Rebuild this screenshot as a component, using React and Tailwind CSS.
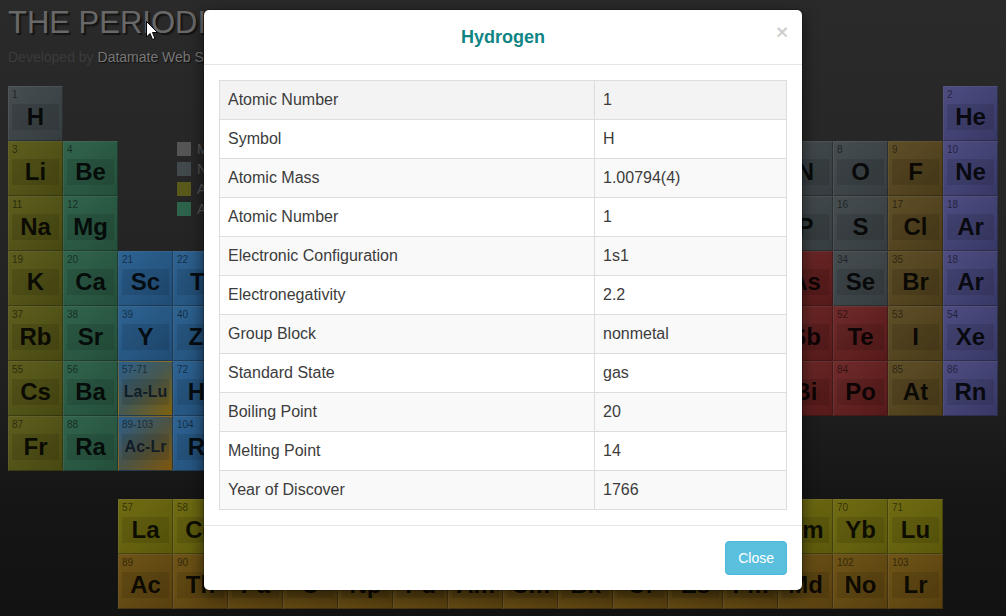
import React from 'react'

const CAT = {
  s: 'bg-[linear-gradient(135deg,#454d50,#363d40)]',
  a: 'bg-[linear-gradient(135deg,#5d5e1d,#484912)]',
  e: 'bg-[linear-gradient(135deg,#31644c,#244f3b)]',
  t: 'bg-[linear-gradient(135deg,#2e6392,#204c75)]',
  p: 'bg-[linear-gradient(135deg,#535353,#3f3f3f)]',
  m: 'bg-[linear-gradient(135deg,#702b2b,#561919)]',
  h: 'bg-[linear-gradient(135deg,#5f4f28,#4a3b19)]',
  g: 'bg-[linear-gradient(135deg,#4d4d82,#383866)]',
  l: 'bg-[linear-gradient(135deg,#706c13,#5b580b)]',
  c: 'bg-[linear-gradient(135deg,#6e5417,#58400f)]',
  x: 'bg-[linear-gradient(135deg,#2c5f8c,#475850,#80610c)]',
  y: 'bg-[linear-gradient(135deg,#2c5f8c,#4c5345,#7e570c)]',
}

// [number, symbol, category]; null = empty slot, 'L' = covered by legend
const rows = [
  [[1, 'H', 's'], null, null, null, null, null, null, null, null, null, null, null, null, null, null, null, null, [2, 'He', 'g']],
  [[3, 'Li', 'a'], [4, 'Be', 'e'], null, 'L', 'L', 'L', 'L', 'L', 'L', 'L', 'L', 'L', [5, 'B', 'm'], [6, 'C', 's'], [7, 'N', 's'], [8, 'O', 's'], [9, 'F', 'h'], [10, 'Ne', 'g']],
  [[11, 'Na', 'a'], [12, 'Mg', 'e'], null, 'L', 'L', 'L', 'L', 'L', 'L', 'L', 'L', 'L', [13, 'Al', 'p'], [14, 'Si', 'm'], [15, 'P', 's'], [16, 'S', 's'], [17, 'Cl', 'h'], [18, 'Ar', 'g']],
  [[19, 'K', 'a'], [20, 'Ca', 'e'], [21, 'Sc', 't'], [22, 'Ti', 't'], [23, 'V', 't'], [24, 'Cr', 't'], [25, 'Mn', 't'], [26, 'Fe', 't'], [27, 'Co', 't'], [28, 'Ni', 't'], [29, 'Cu', 't'], [30, 'Zn', 't'], [31, 'Ga', 'p'], [32, 'Ge', 'm'], [33, 'As', 'm'], [34, 'Se', 's'], [35, 'Br', 'h'], [18, 'Ar', 'g']],
  [[37, 'Rb', 'a'], [38, 'Sr', 'e'], [39, 'Y', 't'], [40, 'Zr', 't'], [41, 'Nb', 't'], [42, 'Mo', 't'], [43, 'Tc', 't'], [44, 'Ru', 't'], [45, 'Rh', 't'], [46, 'Pd', 't'], [47, 'Ag', 't'], [48, 'Cd', 't'], [49, 'In', 'p'], [50, 'Sn', 'p'], [51, 'Sb', 'm'], [52, 'Te', 'm'], [53, 'I', 'h'], [54, 'Xe', 'g']],
  [[55, 'Cs', 'a'], [56, 'Ba', 'e'], ['57-71', 'La-Lu', 'x'], [72, 'Hf', 't'], [73, 'Ta', 't'], [74, 'W', 't'], [75, 'Re', 't'], [76, 'Os', 't'], [77, 'Ir', 't'], [78, 'Pt', 't'], [79, 'Au', 't'], [80, 'Hg', 't'], [81, 'Tl', 'p'], [82, 'Pb', 'p'], [83, 'Bi', 'm'], [84, 'Po', 'm'], [85, 'At', 'h'], [86, 'Rn', 'g']],
  [[87, 'Fr', 'a'], [88, 'Ra', 'e'], ['89-103', 'Ac-Lr', 'y'], [104, 'Rf', 't'], [105, 'Db', 't'], [106, 'Sg', 't'], [107, 'Bh', 't'], [108, 'Hs', 't'], [109, 'Mt', 't'], [110, 'Ds', 't'], [111, 'Rg', 't'], [112, 'Cn', 't'], null, null, null, null, null, null],
]

const lanth = ['La', 'Ce', 'Pr', 'Nd', 'Pm', 'Sm', 'Eu', 'Gd', 'Tb', 'Dy', 'Ho', 'Er', 'Tm', 'Yb', 'Lu']
const actin = ['Ac', 'Th', 'Pa', 'U', 'Np', 'Pu', 'Am', 'Cm', 'Bk', 'Cf', 'Es', 'Fm', 'Md', 'No', 'Lr']

const legend = [
  ['bg-[#555555]', 'Metals'],
  ['bg-[#41494d]', 'Nonmetals'],
  ['bg-[#59591c]', 'Alkali Metals'],
  ['bg-[#2d634b]', 'Alkaline Earth Metals'],
]

const details = [
  ['Atomic Number', '1'],
  ['Symbol', 'H'],
  ['Atomic Mass', '1.00794(4)'],
  ['Atomic Number', '1'],
  ['Electronic Configuration', '1s1'],
  ['Electronegativity', '2.2'],
  ['Group Block', 'nonmetal'],
  ['Standard State', 'gas'],
  ['Boiling Point', '20'],
  ['Melting Point', '14'],
  ['Year of Discover', '1766'],
]

function Cell({ el }) {
  const [n, s, c] = el
  const range = c === 'x' || c === 'y'
  return (
    <div className={`h-[55px] w-[55px] border border-t-white/10 border-l-white/10 border-r-black/35 border-b-black/35 ${CAT[c]}`}>
      <div className="pl-[3px] pt-[2px] text-[10px] leading-[12px] text-black/55">{n}</div>
      <div className="mx-[3px] mt-[3px] flex h-[26px] items-center justify-center bg-black/10">
        <span className={range ? 'text-[16px] font-bold leading-none text-[#0b1624]/90' : 'text-[24px] font-bold leading-none text-black/85'}>{s}</span>
      </div>
    </div>
  )
}

function Cursor() {
  return (
    <svg className="absolute left-[146px] top-[21px]" width="13" height="20" viewBox="0 0 13 20">
      <path d="M0.5 0.5 L0.5 16 L4 12.5 L6.5 18.5 L9 17.5 L6.5 11.5 L11.5 11.5 Z" fill="#fff" stroke="#000" strokeWidth="1" strokeLinejoin="round" />
    </svg>
  )
}

export default function App() {
  return (
    <div className="relative h-[616px] w-full overflow-hidden bg-[linear-gradient(to_bottom,#2a2a2a_0%,#262626_30%,#202020_62%,#161616_80%,#121212_100%)] font-['Liberation_Sans',Arial,sans-serif]">
      <div className="px-[8px]">
        <h1 className="pt-[6px] text-[31px] leading-[34px] text-[#686868] [text-shadow:2px_2px_1px_#141414]">THE PERIODIC TABLE</h1>
        <p className="mt-[7px] text-[14px] leading-[20px] text-[#3b3b3b]">
          Developed by <span className="text-[#777777] [text-shadow:1px_1px_1px_#111]">Datamate Web Solutions</span>
        </p>

        <div className="mt-[19px] grid grid-cols-[repeat(18,55px)] grid-rows-[repeat(7,55px)]">
          <div className="col-start-4 col-span-9 row-start-2 row-span-2 flex flex-col gap-[6px] pl-[4px] pt-[1px]">
            {legend.map(([bg, label]) => (
              <div key={label} className="flex h-[14px] items-center gap-[6px]">
                <span className={`h-[14px] w-[14px] ${bg}`} />
                <span className="text-[14px] leading-none text-[#555555]">{label}</span>
              </div>
            ))}
          </div>
          {rows.flatMap((row, r) =>
            row.map((el, i) => {
              if (el === 'L') return null
              if (!el) return <div key={`${r}-${i}`} />
              return <Cell key={`${r}-${i}`} el={el} />
            })
          )}
        </div>

        <div className="ml-[110px] mt-[28px] grid grid-cols-[repeat(15,55px)]">
          {lanth.map((s, i) => <Cell key={s} el={[57 + i, s, 'l']} />)}
          {actin.map((s, i) => <Cell key={s} el={[89 + i, s, 'c']} />)}
        </div>
      </div>

      <Cursor />

      {/* modal */}
      <div className="absolute left-[203px] top-[9px] w-[600px] rounded-[6px] border border-black/20 bg-white bg-clip-padding shadow-[0_5px_15px_rgba(0,0,0,0.5)]">
        <div className="flex border-b border-[#e5e5e5] p-[15px]">
          <div className="w-[11px]" />
          <h4 className="flex-1 text-center text-[18px] font-bold leading-[24px] text-[#0f8585]">Hydrogen</h4>
          <button className="-mt-[4px] w-[11px] self-start text-[21px] font-bold leading-none text-black/20">×</button>
        </div>
        <div className="p-[15px]">
          <table className="w-full border-collapse border border-[#dddddd] text-[16px] text-[#3c3c3c]">
            <tbody>
              {details.map(([k, v], i) => (
                <tr key={i} className={i === 0 ? 'bg-[#f3f3f3]' : i % 2 === 0 ? 'bg-[#f9f9f9]' : 'bg-white'}>
                  <td className="w-[375px] border border-[#dddddd] px-[8px] py-[8px] leading-[22px]">{k}</td>
                  <td className="border border-[#dddddd] px-[8px] py-[8px] leading-[22px]">{v}</td>
                </tr>
              ))}
            </tbody>
          </table>
        </div>
        <div className="flex justify-end border-t border-[#e5e5e5] p-[15px]">
          <button className="rounded-[4px] border border-[#46b8da] bg-[#5bc0de] px-[12px] py-[6px] text-[14px] leading-[20px] text-white">Close</button>
        </div>
      </div>
    </div>
  )
}
